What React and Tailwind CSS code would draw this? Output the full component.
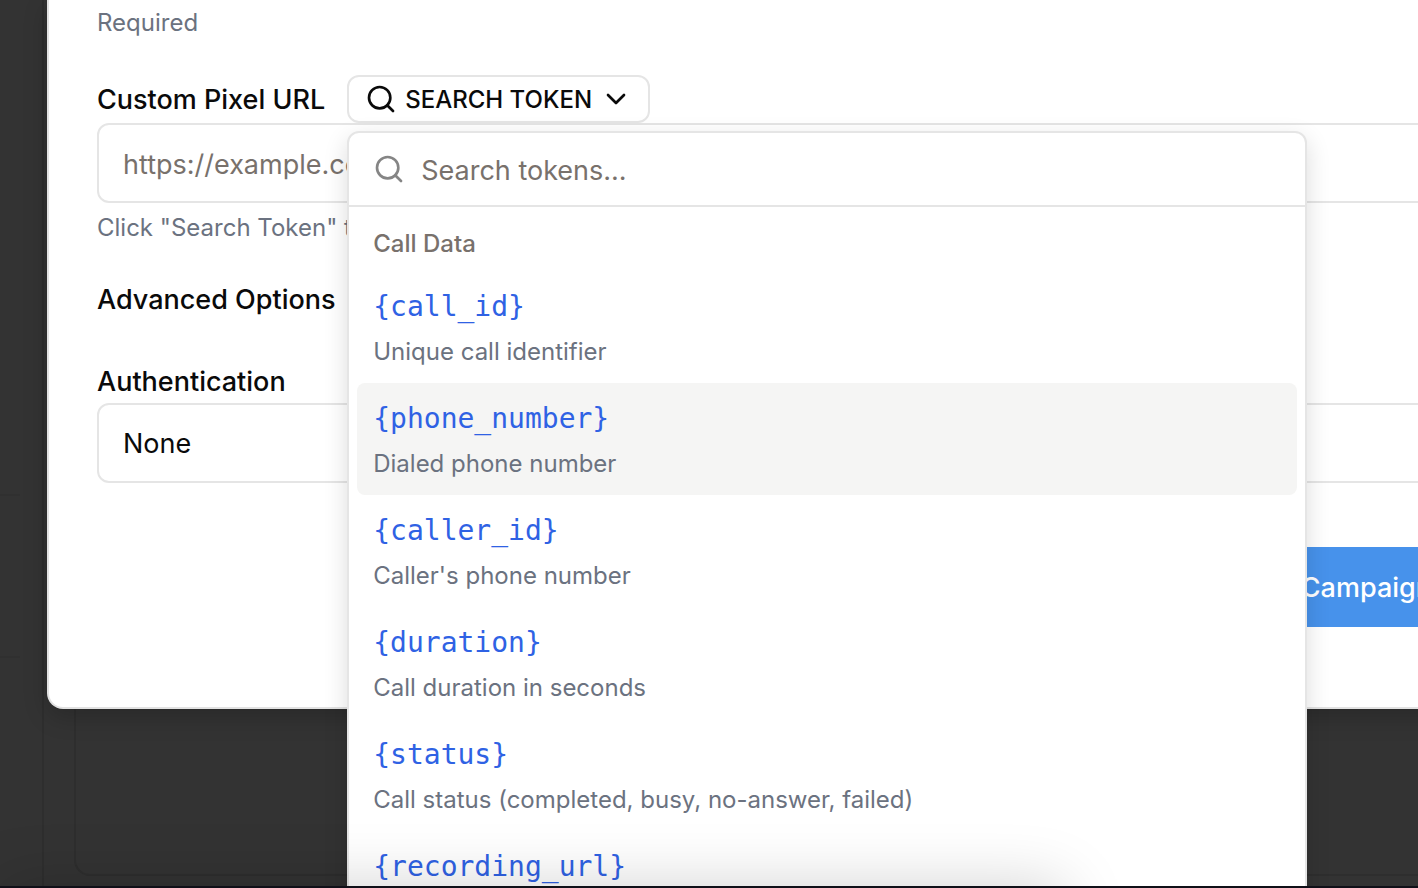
import React from "react";
import { Search, ChevronDown } from "lucide-react";

const tokens = [
  { name: "{call_id}", description: "Unique call identifier" },
  { name: "{phone_number}", description: "Dialed phone number", active: true },
  { name: "{caller_id}", description: "Caller's phone number" },
  { name: "{duration}", description: "Call duration in seconds" },
  { name: "{status}", description: "Call status (completed, busy, no-answer, failed)" },
  { name: "{recording_url}" },
];

function Backdrop() {
  return (
    <div className="absolute inset-0 flex" aria-hidden="true">
      <div className="flex w-11 shrink-0 flex-col border-r-2 border-[#2e2e2e] pt-[494px]">
        <div className="h-[164px] w-5 border-y-2 border-[#303030]" />
      </div>
      <div className="flex flex-1 flex-col pb-2.5 pl-[30px]">
        <div className="-mr-6 flex-1 rounded-2xl border-2 border-[#2e2e2e]" />
      </div>
    </div>
  );
}

function TokenMenu() {
  return (
    <div className="absolute top-full left-0 z-10 mt-2 w-[960px] rounded-xl border-2 border-[#e5e5e5] bg-white shadow-[0_8px_24px_rgba(0,0,0,0.14)]">
      <label className="flex h-[74px] items-center gap-4 border-b-2 border-[#e5e5e5] px-6">
        <Search className="size-8 shrink-0 text-[#858585]" strokeWidth={2} aria-hidden="true" />
        <input
          type="text"
          aria-label="Search tokens"
          placeholder="Search tokens..."
          className="min-w-0 flex-1 bg-transparent pt-1 text-[27px] outline-none placeholder:text-[#78716c]"
        />
      </label>
      <div className="px-2 pt-2">
        <h3 className="flex h-14 items-center px-4 pt-0.5 text-2xl font-medium text-[#78716c]">Call Data</h3>
        <ul>
          {tokens.map((t) => (
            <li key={t.name}>
              <button
                type="button"
                className={
                  t.active
                    ? "flex h-28 w-full flex-col gap-[9px] rounded-lg bg-[#f5f5f4] px-4 pt-4 text-left"
                    : "flex h-28 w-full flex-col gap-[9px] rounded-lg px-4 pt-4 text-left"
                }
              >
                <code className="font-['DejaVu_Sans_Mono',monospace] text-[28px] leading-10 text-[#2f62e4]">{t.name}</code>
                {t.description && <span className="text-2xl leading-8 text-[#6b7280]">{t.description}</span>}
              </button>
            </li>
          ))}
        </ul>
      </div>
    </div>
  );
}

export default function App() {
  return (
    <div className="flex h-screen flex-col overflow-hidden bg-[#333333] font-['Inter',sans-serif] text-[#0a0a0a]">
      <div className="relative flex-1 overflow-hidden">
        <Backdrop />
        <main
          role="dialog"
          aria-label="Campaign"
          className="relative -mr-24 ml-[47px] rounded-b-2xl border-2 border-t-0 border-[#e2e2e2] bg-white px-12 pb-20 shadow-[0_8px_24px_rgba(0,0,0,0.2)]"
        >
          <p className="pt-[7px] text-2xl leading-8 text-[#6b7280]">Required</p>

          <div className="mt-9 flex items-center gap-[22px]">
            <label htmlFor="pixel-url" className="pt-0.5 text-[27px] leading-10 font-medium whitespace-nowrap">
              Custom Pixel URL
            </label>
            <div className="relative">
              <button type="button" className="flex h-12 items-center gap-2 rounded-xl border-2 border-[#e5e5e5] bg-white px-4 text-2xl font-medium">
                <Search className="size-8" strokeWidth={2} aria-hidden="true" />
                <span className="pt-0.5">SEARCH TOKEN</span>
                <ChevronDown className="size-8" strokeWidth={2} aria-hidden="true" />
              </button>
              <TokenMenu />
            </div>
          </div>
          <input
            id="pixel-url"
            type="text"
            placeholder="https://example.com/pixel"
            className="block h-20 w-full rounded-xl border-2 border-[#e5e5e5] px-6 pt-0.5 text-[27px] placeholder:text-[#78716c]"
          />
          <p className="mt-[9px] text-2xl leading-8 text-[#6b7280]">Click "Search Token" to insert a token</p>

          <h2 className="mt-9 text-[27px] leading-10 font-medium">Advanced Options</h2>

          <label htmlFor="authentication" className="mt-[42px] block text-[27px] leading-10 font-medium">
            Authentication
          </label>
          <select
            id="authentication"
            className="mt-px block h-20 w-full appearance-none rounded-xl border-2 border-[#e5e5e5] bg-white px-6 pt-0.5 text-[27px]"
          >
            <option>None</option>
          </select>

          <div className="mt-16 flex justify-end">
            <button type="button" className="h-20 bg-[#4792eb] px-8 pt-0.5 text-[27px] font-medium text-white">
              Create Campaign
            </button>
          </div>
        </main>
        <div
          className="pointer-events-none absolute top-full left-0 z-20 h-40 w-3/4 shadow-[0_0_64px_rgba(0,0,0,0.18)]"
          aria-hidden="true"
        />
      </div>
      <footer className="h-0.5 shrink-0 bg-[#101018]" />
    </div>
  );
}
